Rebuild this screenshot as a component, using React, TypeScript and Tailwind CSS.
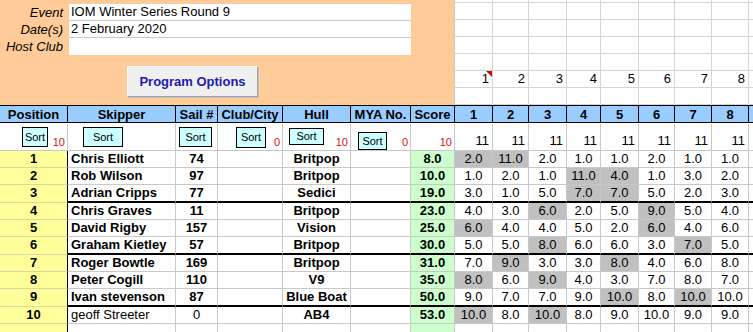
import React from "react";

type Row = {
  pos: number;
  name: string;
  sail: string;
  hull: string;
  score: string;
  races: [string, boolean][];
  nameNormal?: boolean;
};

const g = (v: string): [string, boolean] => [v, true];
const n = (v: string): [string, boolean] => [v, false];

const rows: Row[] = [
  { pos: 1, name: "Chris Elliott", sail: "74", hull: "Britpop", score: "8.0", races: [g("2.0"), g("11.0"), n("2.0"), n("1.0"), n("1.0"), n("2.0"), n("1.0"), n("1.0")] },
  { pos: 2, name: "Rob Wilson", sail: "97", hull: "Britpop", score: "10.0", races: [n("1.0"), n("2.0"), n("1.0"), g("11.0"), g("4.0"), n("1.0"), n("3.0"), n("2.0")] },
  { pos: 3, name: "Adrian Cripps", sail: "77", hull: "Sedici", score: "19.0", races: [n("3.0"), n("1.0"), n("5.0"), g("7.0"), g("7.0"), n("5.0"), n("2.0"), n("3.0")] },
  { pos: 4, name: "Chris Graves", sail: "11", hull: "Britpop", score: "23.0", races: [n("4.0"), n("3.0"), g("6.0"), n("2.0"), n("5.0"), g("9.0"), n("5.0"), n("4.0")] },
  { pos: 5, name: "David Rigby", sail: "157", hull: "Vision", score: "25.0", races: [g("6.0"), n("4.0"), n("4.0"), n("5.0"), n("2.0"), g("6.0"), n("4.0"), n("6.0")] },
  { pos: 6, name: "Graham Kietley", sail: "57", hull: "Britpop", score: "30.0", races: [n("5.0"), n("5.0"), g("8.0"), n("6.0"), n("6.0"), n("3.0"), g("7.0"), n("5.0")] },
  { pos: 7, name: "Roger Bowtle", sail: "169", hull: "Britpop", score: "31.0", races: [n("7.0"), g("9.0"), n("3.0"), n("3.0"), g("8.0"), n("4.0"), n("6.0"), n("8.0")] },
  { pos: 8, name: "Peter Cogill", sail: "110", hull: "V9", score: "35.0", races: [g("8.0"), n("6.0"), g("9.0"), n("4.0"), n("3.0"), n("7.0"), n("8.0"), n("7.0")] },
  { pos: 9, name: "Ivan stevenson", sail: "87", hull: "Blue Boat", score: "50.0", races: [n("9.0"), n("7.0"), n("7.0"), n("9.0"), g("10.0"), n("8.0"), g("10.0"), n("10.0")] },
  { pos: 10, name: "geoff Streeter", sail: "0", hull: "AB4", score: "53.0", races: [g("10.0"), n("8.0"), g("10.0"), n("8.0"), n("9.0"), n("10.0"), n("9.0"), n("9.0")], nameNormal: true },
];

const GRID =
  "grid grid-cols-[68px_108px_42px_65px_68px_60px_44px_38px_36px_38px_34px_38px_36px_37px_37px_40px]";
const RACEGRID = "grid grid-cols-[38px_36px_38px_34px_38px_36px_37px_37px_40px]";

function SortBtn({ w, h, ml, mt }: { w: string; h: string; ml: string; mt: string }) {
  return (
    <div
      className={`${w} ${h} ${ml} ${mt} shrink-0 self-start bg-[#CCFFFF] border border-black flex items-center justify-center text-[11px] leading-none text-black`}
    >
      Sort
    </div>
  );
}

function Red({ children }: { children: React.ReactNode }) {
  return (
    <div className="ml-auto self-end pr-[2px] pb-[2px] text-[11px] leading-[11px] text-[#d01010]">
      {children}
    </div>
  );
}

export default function App() {
  const headers = ["Position", "Skipper", "Sail #", "Club/City", "Hull", "MYA No.", "Score", "1", "2", "3", "4", "5", "6", "7", "8", ""];
  const topRowHeights = ["h-[3px]", "h-[17px]", "h-[17px]", "h-[17px]", "h-[17px]", "h-[17px]", "h-[17px]"];

  return (
    <div className="w-[753px] h-[332px] overflow-hidden bg-white font-['Liberation_Sans',Arial,sans-serif] text-black">
      <div className="w-[789px]">
        {/* Top section */}
        <div className="flex h-[105px]">
          <div className="w-[455px] h-[105px] bg-[#FFCC99] border-r border-[#c8c8c8] pt-[4px] shrink-0">
            {[
              ["Event", "IOM Winter Series Round 9"],
              ["Date(s)", "2 February 2020"],
              ["Host Club", ""],
            ].map(([label, value], i) => (
              <div key={label} className="flex h-[17px]">
                <div className="w-[64px] pr-[1px] text-right italic text-[13px] leading-[17px]">{label}</div>
                <div
                  className={`ml-[5px] w-[342px] h-[17px] bg-white pl-[2px] text-[13px] leading-[16px] ${
                    i < 2 ? "border-b border-[#c8c8c8]" : ""
                  }`}
                >
                  {value}
                </div>
              </div>
            ))}
            <div className="mt-[11px] ml-[127px] w-[131px] h-[31px] bg-[#F0F0F0] border border-t-white border-l-white border-r-[#a0a0a0] border-b-[#a0a0a0] shadow-[1px_1px_0_#c0c0c0] flex items-center justify-center text-[13px] font-bold text-[#1c1cb0]">
              Program Options
            </div>
          </div>
          <div className={`${RACEGRID} flex-1`}>
            {topRowHeights.map((h, r) =>
              Array.from({ length: 9 }).map((_, c) => (
                <div
                  key={`${r}-${c}`}
                  className={`${h} border-r border-b border-[#d4d4d4] relative text-right pr-[3px] text-[13px] leading-[16px]`}
                >
                  {r === 5 && c < 8 ? c + 1 : ""}
                  {r === 5 && c === 0 ? (
                    <div className="absolute right-0 top-0 w-0 h-0 border-t-[6px] border-t-[#e00000] border-l-[6px] border-l-transparent" />
                  ) : null}
                </div>
              ))
            )}
          </div>
        </div>

        {/* Header row */}
        <div className={`${GRID} h-[18px] border-t border-b border-black bg-[#99CCFF]`}>
          {headers.map((h, i) => (
            <div
              key={i}
              className="border-r border-black flex items-center justify-center text-[13px] font-bold leading-none"
            >
              {h}
            </div>
          ))}
        </div>

        {/* Sort row */}
        <div className={`${GRID} h-[28px] border-b border-[#c8c8c8]`}>
          <div className="flex border-r border-[#c8c8c8]">
            <SortBtn w="w-[26px]" h="h-[20px]" ml="ml-[22px]" mt="mt-[4px]" />
            <Red>10</Red>
          </div>
          <div className="flex border-r border-[#c8c8c8]">
            <SortBtn w="w-[40px]" h="h-[20px]" ml="ml-[15px]" mt="mt-[4px]" />
          </div>
          <div className="flex border-r border-[#c8c8c8]">
            <SortBtn w="w-[33px]" h="h-[20px]" ml="ml-[3px]" mt="mt-[4px]" />
          </div>
          <div className="flex border-r border-[#c8c8c8]">
            <SortBtn w="w-[30px]" h="h-[21px]" ml="ml-[18px]" mt="mt-[4px]" />
            <Red>0</Red>
          </div>
          <div className="flex border-r border-[#c8c8c8]">
            <SortBtn w="w-[35px]" h="h-[17px]" ml="ml-[6px]" mt="mt-[5px]" />
            <Red>10</Red>
          </div>
          <div className="flex border-r border-[#c8c8c8]">
            <SortBtn w="w-[29px]" h="h-[18px]" ml="ml-[7px]" mt="mt-[9px]" />
            <Red>0</Red>
          </div>
          <div className="flex border-r border-[#c8c8c8]">
            <Red>10</Red>
          </div>
          {Array.from({ length: 9 }).map((_, i) => (
            <div key={i} className="flex items-end justify-end pr-[3px] pb-[1px] border-r border-[#c8c8c8] text-[13px] leading-[16px]">
              {i < 8 ? "11" : ""}
            </div>
          ))}
        </div>

        {/* Data rows */}
        {rows.map((r, i) => {
          const thick = i === 2 || i === 5 || i === 8;
          const h = thick ? "h-[18px]" : "h-[17px]";
          const bb = thick ? "border-b-2 border-b-black" : "border-b border-b-[#c8c8c8]";
          return (
            <div key={r.pos} className={`${GRID} ${h}`}>
              <div className="bg-[#FFFF99] border-r border-r-black border-b border-b-[#d8d8a0] text-center text-[13px] font-bold leading-[16px]">
                {r.pos}
              </div>
              <div className={`${bb} border-r border-r-[#c8c8c8] pl-[3px] text-[13px] leading-[16px] whitespace-nowrap ${r.nameNormal ? "" : "font-bold"}`}>
                {r.name}
              </div>
              <div className={`${bb} border-r border-r-[#c8c8c8] text-center text-[13px] leading-[16px] ${r.nameNormal ? "" : "font-bold"}`}>
                {r.sail}
              </div>
              <div className={`${bb} border-r border-r-[#c8c8c8]`} />
              <div className={`${bb} border-r border-r-[#c8c8c8] text-center text-[13px] font-bold leading-[16px] whitespace-nowrap`}>
                {r.hull}
              </div>
              <div className={`${bb} border-r border-r-[#c8c8c8]`} />
              <div className={`${bb} border-r border-r-[#c8c8c8] bg-[#CCFFCC] text-center text-[13px] font-bold leading-[16px]`}>
                {r.score}
              </div>
              {r.races.map(([v, grey], j) => (
                <div
                  key={j}
                  className={`${bb} border-r border-r-[#c8c8c8] ${grey ? "bg-[#C0C0C0]" : ""} text-center text-[13px] leading-[16px]`}
                >
                  {v}
                </div>
              ))}
              <div className={`${bb} border-r border-r-[#c8c8c8]`} />
            </div>
          );
        })}

        {/* Trailing empty row */}
        <div className={`${GRID} h-[17px]`}>
          <div className="bg-[#FFFF99] border-r border-r-black" />
          {Array.from({ length: 15 }).map((_, i) => (
            <div key={i} className={`border-r border-r-[#c8c8c8] border-b border-b-[#c8c8c8] ${i === 5 ? "bg-[#CCFFCC]" : ""}`} />
          ))}
        </div>
      </div>
    </div>
  );
}
